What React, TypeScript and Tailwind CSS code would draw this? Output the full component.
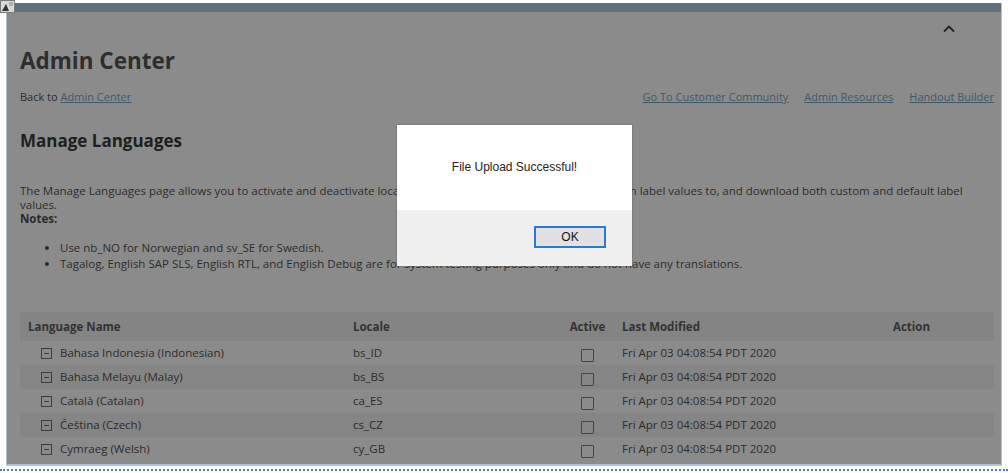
import React from 'react'

const ROWS = [
  { name: 'Bahasa Indonesia (Indonesian)', locale: 'bs_ID' },
  { name: 'Bahasa Melayu (Malay)', locale: 'bs_BS' },
  { name: 'Català (Catalan)', locale: 'ca_ES' },
  { name: 'Čeština (Czech)', locale: 'cs_CZ' },
  { name: 'Cymraeg (Welsh)', locale: 'cy_GB' },
]

const MODIFIED = 'Fri Apr 03 04:08:54 PDT 2020'

function CollapseIcon() {
  return (
    <span className="flex h-[11px] w-[11px] items-center justify-center border border-[#3c3c3c]">
      <span className="h-px w-[5px] bg-[#3c3c3c]" />
    </span>
  )
}

function BrokenImage() {
  return (
    <svg width="15" height="13" viewBox="0 0 15 13" className="absolute left-0 top-0">
      <rect x="0.5" y="0.5" width="14" height="12" fill="#d9d9d9" stroke="#7a7a7a" />
      <path d="M2 11 L6 4 L9 11 Z" fill="#333" />
      <rect x="9" y="2" width="4" height="4" fill="#a0b4c0" />
    </svg>
  )
}

export default function App() {
  return (
    <div className="relative h-[473px] w-[1008px] overflow-hidden bg-white font-['Open_Sans',sans-serif] text-[#2b2b2b]">
      <BrokenImage />

      {/* framed page, dimmed by modal backdrop */}
      <div className="ml-[6px] mt-[3px] flex h-[463px] w-[996px] flex-col border-x border-b-[2px] border-[#a9c3cf] bg-[#8b8b8b]">
        <div className="h-[9px] bg-[#5f717d]" />

        <div className="flex justify-end pr-[45px] pt-[12px]">
          <svg width="14" height="9" viewBox="0 0 14 9">
            <path d="M2 7.5 L7 2.5 L12 7.5" fill="none" stroke="#222" strokeWidth="1.8" />
          </svg>
        </div>

        <div className="pl-[13px] pr-[7px]">
          <h1 className="mt-[13px] text-[22.5px] font-bold leading-[30px] text-[#2e2e2e]">Admin Center</h1>

          <div className="mt-[14px] flex items-center justify-between text-[11px] leading-[14px]">
            <div>
              Back to <span className="text-[#3f5868] underline">Admin Center</span>
            </div>
            <div className="flex gap-[16px] text-[#3f5868] underline">
              <span>Go To Customer Community</span>
              <span>Admin Resources</span>
              <span>Handout Builder</span>
            </div>
          </div>

          <h2 className="mt-[25px] text-[17px] font-bold leading-[24px] text-[#1f1f1f]">Manage Languages</h2>

          <div className="mt-[31px] text-[11.5px] leading-[14px]">
            <p className="pr-[20px]">
              The Manage Languages page allows you to activate and deactivate locales, review the default labels, upload custom label values to, and download both custom and default label values.
            </p>
            <p className="font-bold">Notes:</p>
            <ul className="mt-[14px] list-disc pl-[40px] leading-[16px]">
              <li>Use nb_NO for Norwegian and sv_SE for Swedish.</li>
              <li>Tagalog, English SAP SLS, English RTL, and English Debug are for system testing purposes only and do not have any translations.</li>
            </ul>
          </div>

          <table className="mt-[40px] w-[974px] table-fixed border-collapse text-[11.5px]">
            <thead>
              <tr className="h-[29px] bg-[#848484] text-left font-bold text-[#333]">
                <th className="w-[333px] pl-[8px]">Language Name</th>
                <th className="w-[212px]">Locale</th>
                <th className="w-[45px] text-center">Active</th>
                <th className="w-[283px] pl-[12px]">Last Modified</th>
                <th>Action</th>
              </tr>
            </thead>
            <tbody>
              {ROWS.map((r, i) => (
                <tr key={r.locale} className={`h-[24px] ${i % 2 === 1 ? 'bg-[#858585]' : 'bg-[#8b8b8b]'}`}>
                  <td className="pl-[21px]">
                    <div className="flex items-center gap-[8px]">
                      <CollapseIcon />
                      <span>{r.name}</span>
                    </div>
                  </td>
                  <td>{r.locale}</td>
                  <td>
                    <div className="flex justify-center pt-[4px]">
                      <span className="h-[13px] w-[13px] rounded-[1px] border border-[#444]" />
                    </div>
                  </td>
                  <td className="pl-[12px]">{MODIFIED}</td>
                  <td />
                </tr>
              ))}
            </tbody>
          </table>
        </div>
      </div>

      <div className="mt-[3px] border-t-[2px] border-dotted border-[#3f7fd0]" />

      {/* modal */}
      <div className="absolute left-[397px] top-[125px] w-[235px] font-['Liberation_Sans',Arial,sans-serif] shadow-[0_0_2px_rgba(0,0,0,0.3)]">
        <div className="flex h-[85px] items-center justify-center bg-white pb-[2px] text-[12px] text-[#222]">
          File Upload Successful!
        </div>
        <div className="flex h-[56px] items-start justify-end bg-[#f0f0f0] pr-[26px] pt-[16px]">
          <button className="h-[22px] w-[72px] border-[2px] border-[#2a7ad5] bg-[#e1e1e1] text-[12px] text-[#111]">
            OK
          </button>
        </div>
      </div>
    </div>
  )
}
